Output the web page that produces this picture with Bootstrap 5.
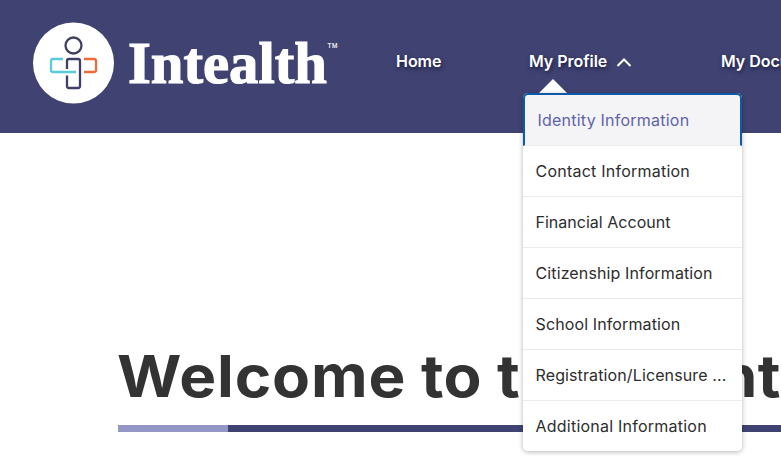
<!DOCTYPE html>
<html lang="en">
<head>
<meta charset="utf-8">
<meta name="viewport" content="width=device-width, initial-scale=1">
<title>Intealth</title>
<link href="https://cdn.jsdelivr.net/npm/bootstrap@5.3.0/dist/css/bootstrap.min.css" rel="stylesheet">
<style>
body{font-family:Inter,"Liberation Sans",sans-serif;font-size:16px;color:#2d2d2d;width:781px;height:459px;overflow:hidden}
.site-bar{background:#404372;height:133px}
.brand-art{display:block;width:350px;height:133px;flex:none}
.main-links{margin-left:46px;padding-top:49px;height:133px}
.main-links .nav-link{color:#fff;font-weight:600;font-size:16px;line-height:24px;letter-spacing:-.03px;text-shadow:1px 2px 4px #16193b;white-space:nowrap;padding:0}
.link-home{width:133px}
.profile-item{width:192px}
.pointer{position:absolute;left:10px;top:30px;width:28px;height:14px;background:#fff;clip-path:polygon(50% 0,100% 100%,0 100%)}
.profile-menu{position:absolute;left:-6px;top:44px;width:219px;box-shadow:0 1px 5px rgba(0,0,0,.3);border-radius:5px;background:#fff;z-index:5}
.profile-menu .list-group-item{height:51px;padding:0 12.500px;border:0;border-bottom:1px solid #ebebeb;color:#2d2d2d;line-height:24px;display:flex;align-items:center;white-space:nowrap;letter-spacing:.12px}
.profile-menu .list-group-item.airy{letter-spacing:.23px}
.profile-menu .list-group-item.snug{letter-spacing:.02px}
.profile-menu .list-group-item:first-child{height:53px;background:#f4f4f7;color:#6063a8;border:2px solid #0d5ba8;border-bottom:1px solid #ebebeb;border-radius:5px 5px 0 0}
.profile-menu .list-group-item:last-child{height:50px;border-bottom:0;border-radius:0 0 5px 5px}
.welcome{margin-left:118px;padding-top:208px}
.welcome h1{font-size:58px;font-weight:700;line-height:70px;color:#333;white-space:nowrap;margin:0}
.welcome h1 span{flex:none;transform:scaleX(1.07);transform-origin:0 50%;letter-spacing:.3px}
.welcome h1 .w-greet{width:304px;letter-spacing:.8px;margin-left:-1px}
.w-to{width:76px}
.w-the{width:204px}
.rule{height:7px;background:#404372;margin-top:14px}
.rule span{display:block;width:110px;height:7px;background:#9497c6}
</style>
</head>
<body>
<header class="site-bar d-flex">
  <a href="#" aria-label="Intealth">
    <svg class="brand-art" viewBox="0 0 350 133">
      <circle cx="73.500" cy="63" r="40.500" fill="#fff"/>
      <g fill="none" stroke-width="2.300" stroke-linejoin="round">
        <circle cx="73.500" cy="45.500" r="8" stroke="#404066"/>
        <path d="M67 69V61q0-2 2-2h9q2 0 2 2v25q0 2-2 2h-9q-2 0-2-2V75.500" stroke="#404066"/>
        <path d="M63 59H53q-2 0-2 2v9q0 2 2 2h23" stroke="#5acbdc"/>
        <path d="M84 59h10q2 0 2 2v9q0 2-2 2H84" stroke="#ef6b3b"/>
      </g>
      <text x="128" y="83" font-family="Liberation Serif,serif" font-weight="700" font-size="60" fill="#fff" stroke="#fff" stroke-width="1.200" textLength="199" lengthAdjust="spacingAndGlyphs">Intealth</text>
      <text x="327.500" y="48" font-family="Liberation Sans,sans-serif" font-size="6.500" fill="#fff" stroke="#fff" stroke-width=".15" textLength="10">TM</text>
    </svg>
  </a>
  <nav class="nav main-links flex-nowrap">
    <div class="link-home"><a class="nav-link" href="#">Home</a></div>
    <div class="profile-item position-relative">
      <a class="nav-link d-flex align-items-center" href="#">My Profile
        <svg class="ms-2" width="18" height="14" viewBox="0 0 18 14"><path d="M2.500 12 9 5.500l6.500 6.500" fill="none" stroke="#fff" stroke-width="2"/></svg>
      </a>
      <div class="pointer"></div>
      <div class="profile-menu list-group">
        <a class="list-group-item airy" href="#">Identity Information</a>
        <a class="list-group-item airy" href="#">Contact Information</a>
        <a class="list-group-item snug" href="#">Financial Account</a>
        <a class="list-group-item" href="#">Citizenship Information</a>
        <a class="list-group-item" href="#">School Information</a>
        <a class="list-group-item" href="#">Registration/Licensure ...</a>
        <a class="list-group-item airy" href="#">Additional Information</a>
      </div>
    </div>
    <div><a class="nav-link" href="#">My Documents</a></div>
  </nav>
</header>
<main class="welcome">
  <h1 class="d-flex"><span class="w-greet">Welcome</span> <span class="w-to">to</span> <span class="w-the">the</span> <span>Int</span></h1>
  <div class="rule"><span></span></div>
</main>
<script src="https://cdn.jsdelivr.net/npm/bootstrap@5.3.0/dist/js/bootstrap.bundle.min.js"></script>
</body>
</html>
